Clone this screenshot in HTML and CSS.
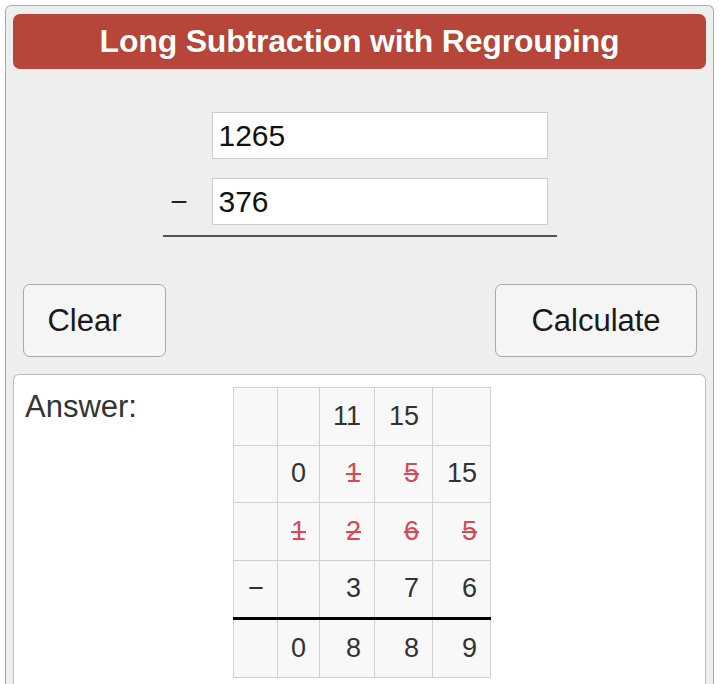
FILE: index.html
```html
<!DOCTYPE html>
<html lang="en">
<head>
    <meta charset="UTF-8">
    <title>Long Subtraction with Regrouping</title>
    <link rel="stylesheet" href="styles.css">
</head>
<body>
    <div class="calc">
        <div class="calc-title">Long Subtraction with Regrouping</div>

        <div class="problem">
            <div class="problem-row">
                <span class="sign"></span>
                <input class="num-input" type="text" value="1265">
            </div>
            <div class="problem-row">
                <span class="sign">&minus;</span>
                <input class="num-input" type="text" value="376">
            </div>
        </div>

        <div class="actions">
            <button class="btn btn-clear">Clear</button>
            <button class="btn btn-calc">Calculate</button>
        </div>

        <div class="answer">
            <div class="answer-label">Answer:</div>
            <table class="work">
                <colgroup>
                    <col class="c-sign">
                    <col class="c-narrow">
                    <col class="c-mid">
                    <col class="c-wide">
                    <col class="c-wide">
                </colgroup>
                <tr>
                    <td></td><td></td><td>11</td><td>15</td><td></td>
                </tr>
                <tr>
                    <td></td><td>0</td><td><s>1</s></td><td><s>5</s></td><td>15</td>
                </tr>
                <tr>
                    <td></td><td><s>1</s></td><td><s>2</s></td><td><s>6</s></td><td><s>5</s></td>
                </tr>
                <tr class="subtrahend">
                    <td>&minus;</td><td></td><td>3</td><td>7</td><td>6</td>
                </tr>
                <tr>
                    <td></td><td>0</td><td>8</td><td>8</td><td>9</td>
                </tr>
            </table>
        </div>
    </div>
</body>
</html>
```

FILE: styles.css
```css
html, body {
    height: 100%;
    overflow: hidden;
}
body {
    margin: 0;
    padding: 5px 6px 0 5px;
    box-sizing: border-box;
    font-family: "Liberation Sans", Arial, sans-serif;
    color: #222;
    background-color: #fff;
}
.calc {
    background-color: #eeeeee;
    border: 1px solid #aaa;
    border-bottom: none;
    border-radius: 6px 6px 0 0;
    padding: 8px 7px 0 7px;
    height: 100%;
    box-sizing: border-box;
    display: flex;
    flex-direction: column;
}
.calc-title {
    background-color: #b8453a;
    color: #fff;
    font-weight: bold;
    font-size: 32px;
    letter-spacing: -0.2px;
    text-align: center;
    height: 55px;
    line-height: 55px;
    border-radius: 7px;
    text-shadow: 0 0 1px rgba(0, 0, 0, 0.25);
}
.problem {
    width: 394px;
    margin: 43px auto 0;
    border-bottom: 2px solid #555;
    padding-bottom: 10px;
    display: flex;
    flex-direction: column;
    gap: 19px;
}
.problem-row {
    display: flex;
    align-items: center;
}
.sign {
    width: 49px;
    padding-right: 16px;
    box-sizing: border-box;
    text-align: center;
    font-size: 30px;
}
.num-input {
    width: 336px;
    height: 47px;
    box-sizing: border-box;
    border: 1px solid #ccc;
    background-color: #fff;
    font-family: "Liberation Sans", Arial, sans-serif;
    font-size: 30px;
    color: #111;
    padding: 0 6px;
    margin: 0;
    outline: none;
}
.actions {
    display: flex;
    justify-content: space-between;
    padding: 0 9px 0 10px;
    margin-top: 47px;
}
.btn {
    height: 73px;
    padding: 0;
    border: 1px solid #a9a9a9;
    border-radius: 7px;
    background-color: #f5f5f5;
    font-family: "Liberation Sans", Arial, sans-serif;
    font-size: 31px;
    color: #1a1a1a;
    cursor: pointer;
}
.btn-clear {
    width: 143px;
    padding-right: 20px;
}
.btn-calc {
    width: 202px;
}
.answer {
    margin-top: 17px;
    flex: 1;
    background-color: #fff;
    border: 1px solid #bbb;
    border-bottom: none;
    border-radius: 6px 6px 0 0;
    display: flex;
    padding: 12px 11px 0;
}
.answer-label {
    width: 208px;
    font-size: 31px;
    color: #333;
    line-height: 30px;
    padding-top: 5px;
}
.work {
    border-collapse: collapse;
    align-self: flex-start;
    font-size: 27px;
    color: #333;
}
.work td {
    height: 56.5px;
    border: 1px solid #d0d0d0;
    background-color: #f8f8f8;
    text-align: right;
    padding: 0 13px 0 0;
}
.work .c-sign { width: 44px; }
.work .c-narrow { width: 42px; }
.work .c-mid { width: 55px; }
.work .c-wide { width: 58px; }
.work .subtrahend td {
    border-bottom: 3px solid #000;
}
.work s {
    color: #d64a55;
    text-decoration-color: #d64a55;
}
```
